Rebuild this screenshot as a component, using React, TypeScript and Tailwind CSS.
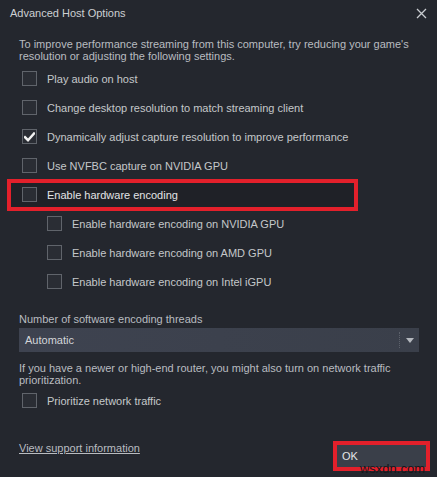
import React from 'react'

const font = { fontFamily: '"Liberation Sans", Arial, sans-serif' }

function Box({ checked = false }: { checked?: boolean }) {
  return (
    <div className="w-[15px] h-[15px] border border-[#60646b] bg-[#2a2d34] flex items-center justify-center shrink-0">
      {checked && (
        <svg width="11" height="10" viewBox="0 0 11 10">
          <path d="M1 5.2 L4 8.2 L10 1.5" stroke="#f2f2f2" strokeWidth="2.4" fill="none" strokeLinecap="square" />
        </svg>
      )}
    </div>
  )
}

function Row({
  label,
  checked,
  indent,
  bright,
}: {
  label: string
  checked?: boolean
  indent?: boolean
  bright?: boolean
}) {
  return (
    <div className={`relative h-[29px] flex items-center gap-[10px] ${indent ? 'pl-[28px]' : 'pl-[3px]'}`}>
      <Box checked={checked} />
      <span className={bright ? 'text-[#e2e4e6]' : 'text-[#c4c7ca]'}>{label}</span>
    </div>
  )
}

export default function App() {
  return (
    <div className="relative w-[437px] h-[477px] bg-[#24272e] text-[11px] leading-[12px] overflow-hidden" style={font}>
      {/* title bar */}
      <div className="h-[26px] flex items-center justify-between pl-[10px] pr-[10px]">
        <span className="text-[#cdd0d3]">Advanced Host Options</span>
        <svg width="11" height="11" viewBox="0 0 11 11">
          <path d="M1 1 L10 10 M10 1 L1 10" stroke="#c9ccd0" strokeWidth="1.3" />
        </svg>
      </div>

      <div className="pl-[19px] pr-[18px] pt-[12px]">
        <p className="text-[#b9bcc0]">
          To improve performance streaming from this computer, try reducing your game's resolution or adjusting the
          following settings.
        </p>

        <div className="mt-[2px]">
          <Row label="Play audio on host" />
          <Row label="Change desktop resolution to match streaming client" />
          <Row label="Dynamically adjust capture resolution to improve performance" checked />
          <Row label="Use NVFBC capture on NVIDIA GPU" />
          <div className="relative">
            <div className="absolute left-[-12px] top-[-1px] w-[351px] h-[32px] border-[4px] border-[#e3202b] bg-[#1f2127]" />
            <Row label="Enable hardware encoding" bright />
          </div>
          <Row label="Enable hardware encoding on NVIDIA GPU" indent />
          <Row label="Enable hardware encoding on AMD GPU" indent />
          <Row label="Enable hardware encoding on Intel iGPU" indent />
        </div>

        <p className="mt-[17px] text-[#b9bcc0]">Number of software encoding threads</p>

        <div className="mt-[3px] w-[400px] h-[24px] flex items-center bg-gradient-to-r from-[#3e4350] to-[#3a3f4a]">
          <span className="pl-[6px] flex-1 text-[#d3d6d9]">Automatic</span>
          <div className="h-[16px] border-l border-dotted border-[#5c616b]" />
          <div className="w-[19px] flex justify-center">
            <svg width="8" height="5" viewBox="0 0 8 5">
              <path d="M0 0 L8 0 L4 5 Z" fill="#b4b8be" />
            </svg>
          </div>
        </div>

        <p className="mt-[10px] text-[#b9bcc0]">
          If you have a newer or high-end router, you might also turn on network traffic prioritization.
        </p>

        <Row label="Prioritize network traffic" />
      </div>

      {/* footer */}
      <div className="flex items-start justify-between pl-[19px] pr-[7px] mt-[26px]">
        <span className="pt-[1px] underline text-[#b9bcc0]">View support information</span>
        <div className="border-[4px] border-[#e3202b] w-[97px] h-[30px] bg-[#24272e]">
          <div className="h-full bg-[#3a3f49] flex items-center pl-[5px] text-[#e4e6e8]">OK</div>
        </div>
      </div>

      <span className="absolute right-[12px] bottom-[2px] text-[13px] leading-[13px] text-[#15171b]">wsxdn.com</span>
    </div>
  )
}
